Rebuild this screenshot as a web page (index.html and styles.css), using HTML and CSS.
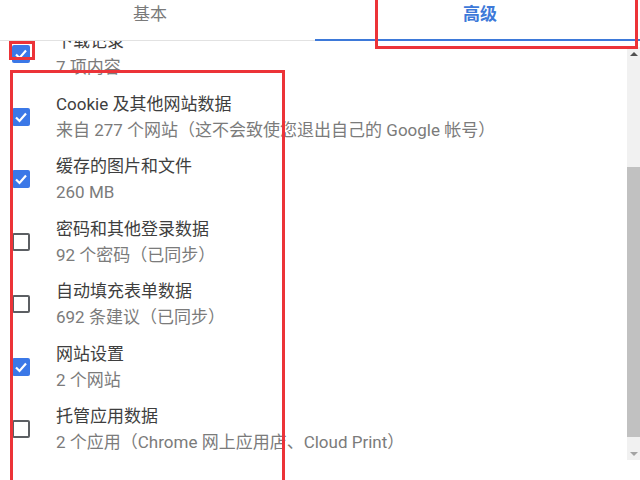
FILE: index.html
```html
<!DOCTYPE html>
<html lang="zh-CN">
<head>
<meta charset="utf-8">
<title>清除浏览数据</title>
<link rel="stylesheet" href="styles.css">
</head>
<body>
<div class="page">
  <div class="tabs">
    <div class="tab">基本</div>
    <div class="tab active">高级</div>
  </div>
  <div class="main">
    <div class="content">
      <ul class="list">
        <li class="item">
          <span class="cb checked"><svg viewBox="0 0 18 18"><polyline points="4,9.5 7.5,13 14,5.5"/></svg></span>
          <div class="text"><div class="title">下载记录</div><div class="sub">7 项内容</div></div>
        </li>
        <li class="item">
          <span class="cb checked"><svg viewBox="0 0 18 18"><polyline points="4,9.5 7.5,13 14,5.5"/></svg></span>
          <div class="text"><div class="title">Cookie 及其他网站数据</div><div class="sub">来自 277 个网站（这不会致使您退出自己的 Google 帐号）</div></div>
        </li>
        <li class="item">
          <span class="cb checked"><svg viewBox="0 0 18 18"><polyline points="4,9.5 7.5,13 14,5.5"/></svg></span>
          <div class="text"><div class="title">缓存的图片和文件</div><div class="sub">260 MB</div></div>
        </li>
        <li class="item">
          <span class="cb"></span>
          <div class="text"><div class="title">密码和其他登录数据</div><div class="sub">92 个密码（已同步）</div></div>
        </li>
        <li class="item">
          <span class="cb"></span>
          <div class="text"><div class="title">自动填充表单数据</div><div class="sub">692 条建议（已同步）</div></div>
        </li>
        <li class="item">
          <span class="cb checked"><svg viewBox="0 0 18 18"><polyline points="4,9.5 7.5,13 14,5.5"/></svg></span>
          <div class="text"><div class="title">网站设置</div><div class="sub">2 个网站</div></div>
        </li>
        <li class="item">
          <span class="cb"></span>
          <div class="text"><div class="title">托管应用数据</div><div class="sub">2 个应用（Chrome 网上应用店、Cloud Print）</div></div>
        </li>
      </ul>
    </div>
    <div class="scrollbar">
      <div class="sb-btn"><span class="arrow-up"></span></div>
      <div class="sb-gap-top"></div>
      <div class="sb-thumb"></div>
      <div class="sb-gap-bottom"></div>
      <div class="sb-btn"><span class="arrow-down"></span></div>
    </div>
  </div>
  <div class="mark mark-tab"></div>
  <div class="mark mark-first"></div>
  <div class="mark mark-list"></div>
</div>
</body>
</html>
```

FILE: styles.css
```css
html, body {
  margin: 0;
  padding: 0;
  background: #fff;
}

.page {
  position: relative;
  width: 640px;
  height: 480px;
  overflow: hidden;
  font-family: Roboto, "Noto Sans CJK SC", sans-serif;
  font-size: 17px;
}

.tabs {
  display: flex;
  margin-left: -15px;
  height: 41px;
  position: relative;
  z-index: 1;
  background: #fff;
}

.tab {
  flex: none;
  width: 330px;
  height: 41px;
  box-sizing: border-box;
  border-bottom: 1px solid #e2e2e2;
  text-align: center;
  line-height: 29px;
  color: #7a7a7a;
}

.tab.active {
  border-bottom: 2px solid #3d79d9;
  color: #3d79d9;
  font-weight: 700;
}

.main {
  display: flex;
  height: 439px;
}

.content {
  flex: 1;
  overflow: hidden;
}

.list {
  margin: -18px 0 0;
  padding: 0;
  list-style: none;
}

.item {
  display: flex;
  align-items: center;
  gap: 26px;
  padding: 5px 0 5.5px 12px;
}

.cb {
  width: 18px;
  height: 18px;
  box-sizing: border-box;
  border: 2px solid #5c5f63;
  border-radius: 2px;
  flex: none;
}

.cb.checked {
  border: none;
  background: #3b78e7;
}

.cb svg {
  display: block;
  width: 18px;
  height: 18px;
  fill: none;
  stroke: #fff;
  stroke-width: 2.2;
}

.title {
  line-height: 26px;
  color: #3e3e3e;
  white-space: nowrap;
}

.sub {
  line-height: 26px;
  color: #7b7b7b;
  white-space: nowrap;
}

.scrollbar {
  width: 13px;
  height: 413px;
  margin-top: 6px;
  background: #f1f1f1;
  display: flex;
  flex-direction: column;
  flex: none;
}

.sb-btn {
  height: 13px;
  display: flex;
  align-items: center;
  justify-content: center;
}

.arrow-up {
  width: 0;
  height: 0;
  border-left: 4px solid transparent;
  border-right: 4px solid transparent;
  border-bottom: 4px solid #505050;
}

.arrow-down {
  width: 0;
  height: 0;
  border-left: 4px solid transparent;
  border-right: 4px solid transparent;
  border-top: 4px solid #a3a3a3;
}

.sb-gap-top {
  height: 107px;
}

.sb-thumb {
  height: 270px;
  background: #c1c1c1;
}

.sb-gap-bottom {
  flex: 1;
}

.mark {
  position: absolute;
  border: 3px solid #ec3338;
  box-sizing: border-box;
  z-index: 2;
}

.mark-tab {
  left: 375px;
  top: -10px;
  width: 263px;
  height: 59px;
}

.mark-first {
  left: 9px;
  top: 41px;
  width: 26px;
  height: 19px;
}

.mark-list {
  left: 10px;
  top: 70px;
  width: 275px;
  height: 430px;
}
```
